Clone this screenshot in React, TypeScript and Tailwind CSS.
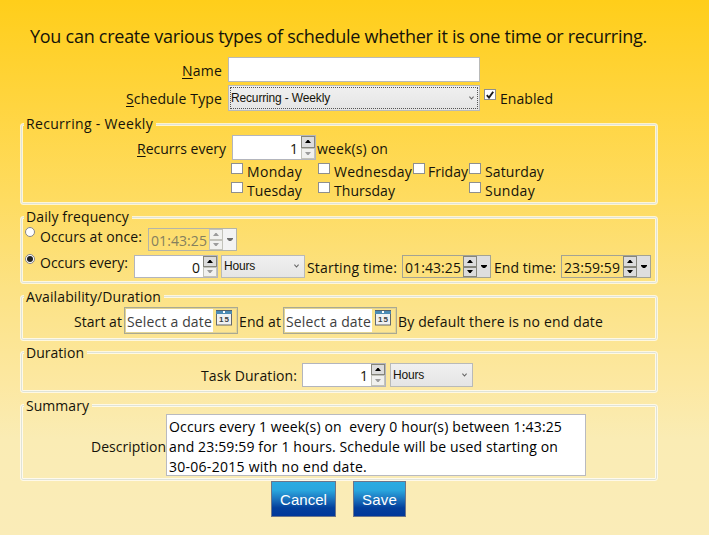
import { useLayoutEffect, useRef } from "react";
import type { ReactNode } from "react";

const PAGE_BG =
  "bg-[linear-gradient(#ffce1a_0%,#ffd540_20%,#fedc62_38%,#fce284_54%,#fce8a2_72%,#faecb4_82%,#faecb8_100%)] bg-fixed";

type TextProps = { w: number; className?: string; children: ReactNode };

/* A single line of text whose tracking is adjusted to fill the given width. */
function Text({ w, className = "", children }: TextProps) {
  const ref = useRef<HTMLSpanElement>(null);
  useLayoutEffect(() => {
    const el = ref.current;
    if (!el) return;
    el.style.letterSpacing = "0px";
    const natural = el.getBoundingClientRect().width;
    const count = (el.textContent ?? "").length;
    el.style.letterSpacing = `${(w - natural) / count}px`;
  }, [w]);
  return (
    <span ref={ref} className={`block w-max shrink-0 whitespace-pre ${className}`}>
      {children}
    </span>
  );
}

type GroupProps = { title: string; titleWidth: number; low?: boolean; className: string; children: ReactNode };

function Group({ title, titleWidth, low = false, className, children }: GroupProps) {
  return (
    <section
      className={`ml-5 w-[638px] shrink-0 rounded-[3px] border border-white/70 shadow-[inset_0_0_0_1px_#dfe3d8,inset_0_0_0_2px_rgba(255,255,255,0.75)] ${className}`}
    >
      <h2 className={`ml-[3px] h-5 w-max pr-[3px] pl-[2px] ${low ? "-mt-[9px] -mb-px" : "-mt-[10px]"} ${PAGE_BG}`}>
        <Text w={titleWidth}>{title}</Text>
      </h2>
      {children}
    </section>
  );
}

function Triangle({ down = false, dim = false }: { down?: boolean; dim?: boolean }) {
  return (
    <svg width="6" height="3" viewBox="0 0 6 3" className={dim ? "fill-[#9c9c9c]" : "fill-black"}>
      <path d={down ? "M0 0h6L3.6 3H2.4z" : "M0 3h6L3.6 0H2.4z"} />
    </svg>
  );
}

function SpinButtons({ dimUp = false, dimDown = false }: { dimUp?: boolean; dimDown?: boolean }) {
  const on = "border-[#85857c] bg-[#dcdcdc]";
  const off = "border-[#c3c3bb] bg-[#f1f1ef]";
  return (
    <div className="flex w-[14px] shrink-0 flex-col">
      <div className={`flex flex-1 items-center justify-center border ${dimUp ? off : on}`}>
        <Triangle dim={dimUp} />
      </div>
      <div className={`flex flex-1 items-center justify-center border ${dimDown ? off : on}`}>
        <Triangle down dim={dimDown} />
      </div>
    </div>
  );
}

function NumberBox({ value, className, pad = "pt-[2px]" }: { value: string; className: string; pad?: string }) {
  return (
    <div className={`flex w-[84px] shrink-0 border border-[#b3b5bd] bg-white ${className}`}>
      <span className={`flex-1 pr-[3px] text-right ${pad}`}>{value}</span>
      <SpinButtons dimDown />
    </div>
  );
}

function TimeBox({ value, dim = false, className }: { value: string; dim?: boolean; className: string }) {
  return (
    <div className={`flex shrink-0 border ${dim ? "border-[#b4b4a8]" : "border-[#a3a394]"} ${className}`}>
      <div className={`flex-1 pt-[2px] pl-[2px] ${dim ? "text-[#85805e]" : ""}`}>
        <Text w={56}>{value}</Text>
      </div>
      <SpinButtons dimUp={dim} dimDown={dim} />
      <div className={`flex w-[13px] shrink-0 items-center justify-center ${dim ? "bg-[#f3f3f3]" : "bg-[#dedede]"}`}>
        <svg width="6" height="3" viewBox="0 0 6 3" className={dim ? "fill-[#6d6d6d]" : "fill-black"}>
          <path d="M0 0h6v1L4 3H2L0 1z" />
        </svg>
      </div>
    </div>
  );
}

function Chevron() {
  return (
    <svg width="5" height="4" viewBox="0 0 5 4" fill="none" stroke="#666" strokeWidth="1.1">
      <path d="M.4.6 2.5 3 4.6.6" />
    </svg>
  );
}

function Combo({ className }: { className: string }) {
  return (
    <div className={`flex shrink-0 items-center justify-between border border-[#b9bab8] bg-linear-to-b from-[#f0f0f0] to-[#e5e5e5] pr-[5px] pl-[2px] font-['Liberation_Sans',Arial,sans-serif] text-xs leading-4 ${className}`}>
      <Text w={31}>Hours</Text>
      <Chevron />
    </div>
  );
}

function Check({ checked = false, className = "" }: { checked?: boolean; className?: string }) {
  return (
    <span className={`flex h-[11px] w-3 shrink-0 items-center justify-center border border-[#8e8f8f] bg-white ${className}`}>
      {checked && (
        <svg width="8" height="8" viewBox="0 0 8 8" fill="none" stroke="#1c1c1c" strokeWidth="1.9">
          <path d="M.8 4.2 3 6.6 7.2.8" />
        </svg>
      )}
    </span>
  );
}

function Radio({ checked = false, className = "" }: { checked?: boolean; className?: string }) {
  return (
    <span className={`flex size-[10px] shrink-0 items-center justify-center rounded-full border border-[#85858a] bg-white ${className}`}>
      {checked && <span className="size-[6px] rounded-full bg-[#222]" />}
    </span>
  );
}

function Day({ name, w, gap = "ml-1" }: { name: string; w: number; gap?: string }) {
  return (
    <div className="flex">
      <Check />
      <div className={`-mt-[1px] ${gap}`}>
        <Text w={w}>{name}</Text>
      </div>
    </div>
  );
}

function DatePicker() {
  return (
    <div className="flex h-[27px] w-[114px] shrink-0 border border-[#a9a993] p-[1px] shadow-[inset_0_0_0_1px_rgba(200,195,150,0.5)]">
      <div className="h-[23px] w-[87px] bg-white pt-[3px] pl-px text-[#3e3e3e]">
        <Text w={85}>Select a date</Text>
      </div>
      <svg width="16" height="16" viewBox="0 0 16 16" className="mt-[1px] ml-[3px]">
        <rect x=".5" y=".5" width="15" height="14.5" fill="#f0f1f2" stroke="#62676d" />
        <path d="M0 0h16v4H0z" fill="#4b8bb5" />
        <path d="M0 0h16v1H0z" fill="#54606a" />
        <rect x="7" y="1" width="2" height="2" fill="#fff" />
        <text x="8" y="12.4" textAnchor="middle" textLength="10" fontSize="8" fontWeight="700" fill="#3c3f44" fontFamily="Liberation Sans">15</text>
      </svg>
    </div>
  );
}

function ActionButton({ className, w, children }: { className: string; w: number; children: string }) {
  return (
    <button
      className={`flex h-9 items-center justify-center border border-[#6c7589] bg-[linear-gradient(#29abe2_0%,#29a5dd_25%,#1c74be_50%,#033f9c_76%,#00379a_100%)] pt-[2px] font-['Liberation_Sans',Arial,sans-serif] text-[15px] leading-5 text-white ${className}`}
    >
      <Text w={w}>{children}</Text>
    </button>
  );
}

export default function App() {
  return (
    <main className={`flex h-[535px] w-[709px] flex-col overflow-hidden font-['Open_Sans','Noto_Sans',sans-serif] text-sm leading-5 text-[#15130a] ${PAGE_BG}`}>
      <h1 className="mt-6 ml-[30px] h-[33px] text-lg leading-6">
        <Text w={617}>You can create various types of schedule whether it is one time or recurring.</Text>
      </h1>

      <div className="flex h-7">
        <div className="flex w-[222px] justify-end pt-1">
          <Text w={40}><u className="underline-offset-2">N</u>ame</Text>
        </div>
        <div className="ml-[6px] h-[25px] w-[252px] border border-[#b9bab8] bg-white" />
      </div>

      <div className="flex h-[38px]">
        <div className="flex w-[222px] justify-end pt-[4px]">
          <Text w={96}><u className="underline-offset-2">S</u>chedule Type</Text>
        </div>
        <div className="ml-[6px] h-[26px] w-[252px] border border-[#b9bab8] bg-linear-to-b from-[#f0f0f0] to-[#e5e5e5] p-[1px]">
          <div className="flex h-full items-center justify-between border border-dotted border-[#555] pr-[3px] pb-[1px] font-['Liberation_Sans',Arial,sans-serif] text-xs leading-4">
            <Text w={99}>Recurring - Weekly</Text>
            <Chevron />
          </div>
        </div>
        <Check checked className="mt-1 ml-1" />
        <div className="mt-1 ml-[4px]"><Text w={53}>Enabled</Text></div>
      </div>

      <Group title="Recurring - Weekly" titleWidth={127} className="mb-[11px] h-[82px]">
        <div className="mt-[1px] flex h-7">
          <div className="mt-[4px] ml-[116px]"><Text w={89}><u className="underline-offset-2">R</u>ecurrs every</Text></div>
          <NumberBox value="1" pad="pt-[3px]" className="ml-[6px] h-[25px]" />
          <div className="mt-[4px] ml-[1px]"><Text w={71}>week(s) on</Text></div>
        </div>
        <div className="ml-[210px] grid grid-cols-[87px_95px_56px_80px] grid-rows-[19px_19px]">
          <Day name="Monday" w={55} />
          <Day name="Wednesday" w={78} />
          <Day name="Friday" w={40} gap="ml-[3px]" />
          <Day name="Saturday" w={59} />
          <Day name="Tuesday" w={55} />
          <Day name="Thursday" w={61} />
          <span />
          <Day name="Sunday" w={50} />
        </div>
      </Group>

      <Group title="Daily frequency" titleWidth={103} className="mb-[11px] h-[68px]">
        <div className="flex h-[28px]">
          <Radio className="mt-0 ml-1" />
          <div className="ml-[5px]"><Text w={102}>Occurs at once:</Text></div>
          <TimeBox value="01:43:25" dim className="mt-[1px] ml-[6px] h-[23px] w-[89px]" />
        </div>
        <div className="flex h-6">
          <Radio checked className="-mt-[1px] ml-1" />
          <div className="-mt-[2px] ml-[5px]"><Text w={88}>Occurs every:</Text></div>
          <NumberBox value="0" className="ml-[6px] h-[23px]" />
          <Combo className="ml-[3px] h-[23px] w-[84px] pb-[2px]" />
          <div className="mt-[3px] ml-[2px]"><Text w={90}>Starting time:</Text></div>
          <TimeBox value="01:43:25" className="ml-[5px] h-[23px] w-[89px]" />
          <div className="mt-[3px] ml-[3px]"><Text w={62}>End time:</Text></div>
          <TimeBox value="23:59:59" className="ml-[5px] h-[23px] w-[90px]" />
        </div>
      </Group>

      <Group title="Availability/Duration" titleWidth={135} low className="mb-[10px] h-[46px]">
        <div className="mt-[1px] flex">
          <div className="mt-[5px] ml-[53px]"><Text w={48}>Start at</Text></div>
          <div className="ml-[2px]"><DatePicker /></div>
          <div className="mt-[5px] ml-[1px]"><Text w={42}>End at</Text></div>
          <div className="ml-[2px]"><DatePicker /></div>
          <div className="mt-[5px] ml-[1px]"><Text w={205}>By default there is no end date</Text></div>
        </div>
      </Group>

      <Group title="Duration" titleWidth={58} low className="mb-[11px] h-[42px]">
        <div className="mt-[1px] flex">
          <div className="mt-[3px] ml-[180px]"><Text w={96}>Task Duration:</Text></div>
          <NumberBox value="1" className="ml-[5px] h-6" />
          <Combo className="ml-1 h-6 w-[83px]" />
        </div>
      </Group>

      <Group title="Summary" titleWidth={63} low className="h-[77px]">
        <div className="-mt-[2px] flex">
          <div className="mt-[23px] ml-[70px]"><Text w={75}>Description</Text></div>
          <div className="h-[62px] w-[420px] border border-[#b9bac0] bg-white pt-[2px] pl-[2px] text-black">
            <Text w={393}>{"Occurs every 1 week(s) on  every 0 hour(s) between 1:43:25"}</Text>
            <Text w={389}>and 23:59:59 for 1 hours. Schedule will be used starting on</Text>
            <Text w={198}>30-06-2015 with no end date.</Text>
          </div>
        </div>
      </Group>

      <div className="ml-[271px] flex gap-[17px]">
        <ActionButton className="w-[65px]" w={47}>Cancel</ActionButton>
        <ActionButton className="w-[53px]" w={35}>Save</ActionButton>
      </div>
    </main>
  );
}
